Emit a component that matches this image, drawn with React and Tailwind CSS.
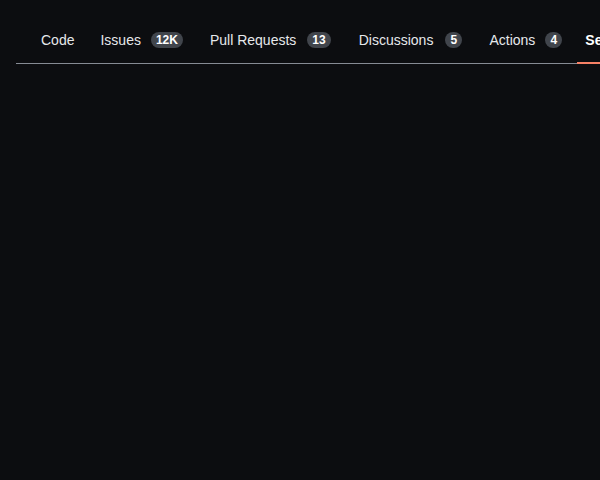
export default function App() {
  const tabs = [
    { label: "Code", tab: "ml-0", badge: "" },
    { label: "Issues", count: "12K", tab: "ml-[10px]", badge: "ml-[10px]" },
    { label: "Pull Requests", count: "13", tab: "ml-[11px]", badge: "ml-[11px]" },
    { label: "Discussions", count: "5", tab: "ml-[12px]", badge: "ml-[12px]" },
    { label: "Actions", count: "4", tab: "ml-[11px]", badge: "ml-[10px]" },
  ];
  return (
    <div
      className="w-[600px] h-[480px] overflow-hidden bg-[#0c0d10]"
      style={{ fontFamily: '"Liberation Sans", Arial, sans-serif' }}
    >
      <div className="ml-4 flex border-b border-[#868b94] pl-[17px] whitespace-nowrap">
        {tabs.map((t) => (
          <div
            key={t.label}
            className={`${t.tab} flex items-center shrink-0 px-2 pt-[30px] pb-[12px] border-b-2 border-transparent -mb-px text-[14px] leading-5 text-[#e6e8eb]`}
          >
            <span>{t.label}</span>
            {t.count && (
              <span
                className={`${t.badge} h-4 min-w-[17px] px-[5px] rounded-full bg-[#41454c] text-white text-[12px] leading-4 font-bold text-center`}
              >
                {t.count}
              </span>
            )}
          </div>
        ))}
        <div className="ml-[7px] flex items-center shrink-0 px-2 pt-[30px] pb-[12px] border-b-2 border-[#f78166] -mb-px text-[14px] leading-5 font-bold text-white">
          <span>Security</span>
        </div>
      </div>
    </div>
  );
}
